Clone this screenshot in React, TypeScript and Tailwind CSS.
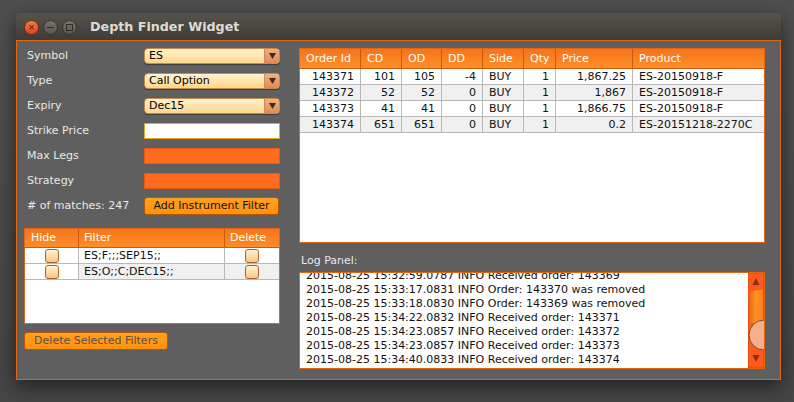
import React from 'react';

const font = { fontFamily: '"DejaVu Sans", Verdana, sans-serif' };

const orders = [
  { id: '143371', cd: '101', od: '105', dd: '-4', side: 'BUY', qty: '1', price: '1,867.25', product: 'ES-20150918-F' },
  { id: '143372', cd: '52', od: '52', dd: '0', side: 'BUY', qty: '1', price: '1,867', product: 'ES-20150918-F' },
  { id: '143373', cd: '41', od: '41', dd: '0', side: 'BUY', qty: '1', price: '1,866.75', product: 'ES-20150918-F' },
  { id: '143374', cd: '651', od: '651', dd: '0', side: 'BUY', qty: '1', price: '0.2', product: 'ES-20151218-2270C' },
];

const logLines = [
  '2015-08-25 15:32:59.0787 INFO Received order: 143369',
  '2015-08-25 15:33:17.0831 INFO Order: 143370 was removed',
  '2015-08-25 15:33:18.0830 INFO Order: 143369 was removed',
  '2015-08-25 15:34:22.0832 INFO Received order: 143371',
  '2015-08-25 15:34:23.0857 INFO Received order: 143372',
  '2015-08-25 15:34:23.0857 INFO Received order: 143373',
  '2015-08-25 15:34:40.0833 INFO Received order: 143374',
];

const Combo = ({ value }: { value: string }) => (
  <div className="flex h-[16px] w-[136px] overflow-hidden rounded-[4px] border border-[#c98a4a] bg-gradient-to-b from-[#fff3cf] to-[#ffd68a] shadow-[0_1px_0_rgba(0,0,0,0.35)]">
    <div className="flex-1 pl-[4px] text-[11px] leading-[14px] text-black">{value}</div>
    <div className="flex w-[15px] items-center justify-center border-l border-[#d08a58] bg-gradient-to-b from-[#f2b080] to-[#e08a55]">
      <svg width="7" height="6" viewBox="0 0 7 6">
        <path d="M0 0 L7 0 L3.5 6 Z" fill="#3a2a20" />
      </svg>
    </div>
  </div>
);

const Check = () => (
  <div className="h-[14px] w-[14px] rounded-[3px] border border-[#a8642e] bg-gradient-to-b from-[#fff2d0] to-[#f8c67e]" />
);

const Row = ({ label, children }: { label: string; children: React.ReactNode }) => (
  <div className="flex h-[16px] items-center">
    <div className="w-[120px] pl-[3px] text-[11px] text-[#e8e8e8]">{label}</div>
    {children}
  </div>
);

const orderCols = [
  { key: 'id', label: 'Order Id', w: 'w-[61px]', right: true },
  { key: 'cd', label: 'CD', w: 'w-[41px]', right: true },
  { key: 'od', label: 'OD', w: 'w-[40px]', right: true },
  { key: 'dd', label: 'DD', w: 'w-[41px]', right: true },
  { key: 'side', label: 'Side', w: 'w-[41px]', right: false },
  { key: 'qty', label: 'Qty', w: 'w-[32px]', right: true },
  { key: 'price', label: 'Price', w: 'w-[77px]', right: true },
  { key: 'product', label: 'Product', w: 'w-[131px]', right: false },
] as const;

export default function App() {
  return (
    <div className="h-[402px] w-[794px] overflow-hidden bg-gradient-to-b from-[#4f4f4f] to-[#454545] pl-[16px] pt-[13px]" style={font}>
      <div className="w-[765px] shadow-[0_6px_18px_rgba(0,0,0,0.55)]">
        {/* Title bar */}
        <div className="flex h-[27px] items-center rounded-t-[6px] bg-gradient-to-b from-[#57534c] to-[#3e3c38] pl-[8px]">
          <div className="flex items-center gap-[4px] pt-[1px]">
            <div className="flex h-[15px] w-[15px] items-center justify-center rounded-full border border-[#7a2e14] bg-gradient-to-b from-[#f37a48] to-[#d9491c] text-[9px] leading-none text-[#4a1a08]">×</div>
            <div className="flex h-[15px] w-[15px] items-center justify-center rounded-full border border-[#35332f] bg-gradient-to-b from-[#76736c] to-[#59564f]">
              <div className="h-[1px] w-[7px] bg-[#2e2c29]" />
            </div>
            <div className="flex h-[15px] w-[15px] items-center justify-center rounded-full border border-[#35332f] bg-gradient-to-b from-[#76736c] to-[#59564f]">
              <div className="h-[7px] w-[7px] border border-[#2e2c29]" />
            </div>
          </div>
          <div className="ml-[13px] text-[12.7px] font-bold text-[#dfdbd2]">Depth Finder Widget</div>
        </div>

        {/* Body */}
        <div className="flex h-[340px] border border-[#e2660f] bg-[#5f5f5f] pl-[7px] pt-[7px]">
          {/* Left panel */}
          <div className="flex w-[256px] flex-col">
            <div className="flex flex-col gap-[9px]">
              <Row label="Symbol"><Combo value="ES" /></Row>
              <Row label="Type"><Combo value="Call Option" /></Row>
              <Row label="Expiry"><Combo value="Dec15" /></Row>
              <Row label="Strike Price">
                <div className="h-[16px] w-[136px] border border-[#e8a423] bg-white" />
              </Row>
              <Row label="Max Legs">
                <div className="h-[16px] w-[136px] border border-[#e35a10] bg-[#ff6a1c]" />
              </Row>
              <Row label="Strategy">
                <div className="h-[16px] w-[136px] border border-[#e35a10] bg-[#ff6a1c]" />
              </Row>
            </div>
            <div className="mt-[8px] flex h-[18px] items-center">
              <div className="w-[120px] pl-[3px] text-[11px] text-[#e8e8e8]">#&nbsp;of matches: 247</div>
              <div className="flex h-[18px] w-[135px] items-center justify-center rounded-[3px] border border-[#b85800] bg-gradient-to-b from-[#ffa11f] to-[#ff910c] text-[11px] text-[#111]">
                Add Instrument Filter
              </div>
            </div>

            {/* Filter table */}
            <div className="mt-[13px] h-[96px] w-[256px] border border-[#e2660f] bg-white text-[11px]">
              <div className="flex h-[19px] border-b border-[#c95a0c] bg-gradient-to-b from-[#f5741b] to-[#ff8d28] text-white">
                <div className="w-[54px] border-r border-[#c95a0c] pl-[6px] leading-[18px]">Hide</div>
                <div className="w-[146px] border-r border-[#c95a0c] pl-[5px] leading-[18px]">Filter</div>
                <div className="flex-1 pl-[5px] leading-[18px]">Delete</div>
              </div>
              {['ES;F;;;SEP15;;', 'ES;O;;C;DEC15;;'].map((f, i) => (
                <div key={f} className="flex h-[16px] border-b border-[#b8b8b8] text-[#111]">
                  <div className="flex w-[54px] items-center justify-center border-r border-[#b8b8b8] bg-white">
                    <Check />
                  </div>
                  <div className={`w-[146px] border-r border-[#b8b8b8] pl-[5px] leading-[15px] ${i === 1 ? 'bg-[#f0f0f0]' : 'bg-white'}`}>{f}</div>
                  <div className={`flex flex-1 items-center justify-center ${i === 1 ? 'bg-[#f0f0f0]' : 'bg-white'}`}>
                    <Check />
                  </div>
                </div>
              ))}
            </div>

            <div className="mt-[8px] flex h-[18px] w-[144px] items-center justify-center rounded-[3px] border border-[#b85800] bg-gradient-to-b from-[#ffa11f] to-[#ff910c] text-[11px] text-[#5a4f45]">
              Delete Selected Filters
            </div>
          </div>

          {/* Right panel */}
          <div className="ml-[19px] flex w-[466px] flex-col">
            <div className="h-[195px] border border-[#e2660f] bg-white text-[11px]">
              <div className="flex h-[20px] border-b border-[#c95a0c] bg-gradient-to-b from-[#f5741b] to-[#ff8d28] text-white">
                {orderCols.map((c, i) => (
                  <div key={c.key} className={`${c.w} pl-[6px] leading-[19px] ${i < orderCols.length - 1 ? 'border-r border-[#c95a0c]' : ''}`}>
                    {c.label}
                  </div>
                ))}
              </div>
              {orders.map((o, r) => (
                <div key={o.id} className={`flex h-[16px] border-b border-[#b8b8b8] text-[#111] ${r % 2 === 1 ? 'bg-[#f0f0f0]' : 'bg-white'}`}>
                  {orderCols.map((c, i) => (
                    <div
                      key={c.key}
                      className={`${c.w} leading-[15px] ${c.right ? 'pr-[6px] text-right' : 'pl-[6px]'} ${i < orderCols.length - 1 ? 'border-r border-[#b8b8b8]' : ''}`}
                    >
                      {o[c.key]}
                    </div>
                  ))}
                </div>
              ))}
            </div>

            <div className="mt-[8px] pl-[2px] text-[11px] leading-[20px] text-[#e8e8e8]">Log Panel:</div>

            <div className="mt-[1px] flex h-[97px] border border-[#e2660f] bg-white">
              <div className="flex-1 overflow-hidden pl-[6px]">
                <div className="-mt-[4px] text-[11px] leading-[14px] text-[#111]">
                  {logLines.map((l, i) => (
                    <div key={i} className="whitespace-nowrap">{l}</div>
                  ))}
                </div>
              </div>
              <svg width="16" height="95" viewBox="0 0 16 95" className="shrink-0">
                <defs>
                  <linearGradient id="thumb" x1="0" x2="1" y1="0" y2="0">
                    <stop offset="0" stopColor="#e8680e" />
                    <stop offset="0.5" stopColor="#ff9526" />
                    <stop offset="1" stopColor="#ff7a14" />
                  </linearGradient>
                </defs>
                <rect x="0" y="0" width="16" height="95" fill="#ff5a1c" stroke="#c8480e" />
                <path d="M8 5 L4.5 12 L11.5 12 Z" fill="#7a3510" />
                <path d="M1 30 Q1 17 10 17 L15 17 L15 50 L1 50 Z" fill="url(#thumb)" />
                <circle cx="16" cy="62" r="15" fill="#f4b08e" stroke="#8a4a20" />
                <path d="M4.5 82 L11.5 82 L8 89 Z" fill="#7a3510" />
              </svg>
            </div>
          </div>
        </div>
      </div>
    </div>
  );
}
